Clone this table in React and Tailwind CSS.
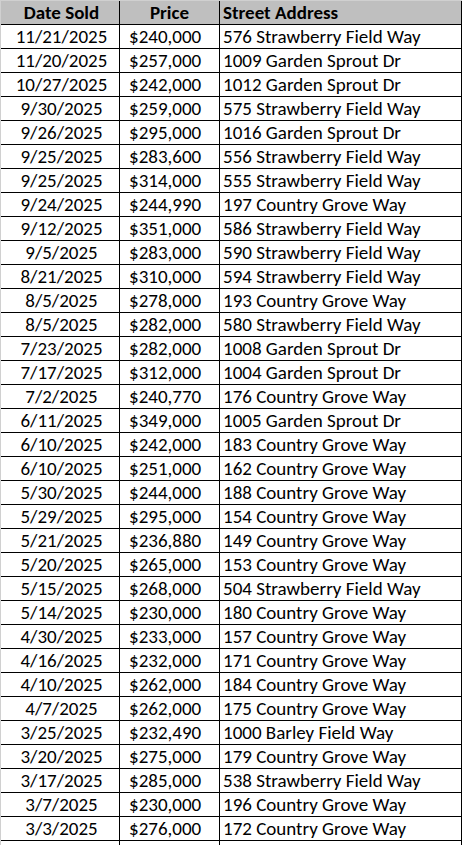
import React from "react";

const rows = [
  ["11/21/2025", "$240,000", "576 Strawberry Field Way"],
  ["11/20/2025", "$257,000", "1009 Garden Sprout Dr"],
  ["10/27/2025", "$242,000", "1012 Garden Sprout Dr"],
  ["9/30/2025", "$259,000", "575 Strawberry Field Way"],
  ["9/26/2025", "$295,000", "1016 Garden Sprout Dr"],
  ["9/25/2025", "$283,600", "556 Strawberry Field Way"],
  ["9/25/2025", "$314,000", "555 Strawberry Field Way"],
  ["9/24/2025", "$244,990", "197 Country Grove Way"],
  ["9/12/2025", "$351,000", "586 Strawberry Field Way"],
  ["9/5/2025", "$283,000", "590 Strawberry Field Way"],
  ["8/21/2025", "$310,000", "594 Strawberry Field Way"],
  ["8/5/2025", "$278,000", "193 Country Grove Way"],
  ["8/5/2025", "$282,000", "580 Strawberry Field Way"],
  ["7/23/2025", "$282,000", "1008 Garden Sprout Dr"],
  ["7/17/2025", "$312,000", "1004 Garden Sprout Dr"],
  ["7/2/2025", "$240,770", "176 Country Grove Way"],
  ["6/11/2025", "$349,000", "1005 Garden Sprout Dr"],
  ["6/10/2025", "$242,000", "183 Country Grove Way"],
  ["6/10/2025", "$251,000", "162 Country Grove Way"],
  ["5/30/2025", "$244,000", "188 Country Grove Way"],
  ["5/29/2025", "$295,000", "154 Country Grove Way"],
  ["5/21/2025", "$236,880", "149 Country Grove Way"],
  ["5/20/2025", "$265,000", "153 Country Grove Way"],
  ["5/15/2025", "$268,000", "504 Strawberry Field Way"],
  ["5/14/2025", "$230,000", "180 Country Grove Way"],
  ["4/30/2025", "$233,000", "157 Country Grove Way"],
  ["4/16/2025", "$232,000", "171 Country Grove Way"],
  ["4/10/2025", "$262,000", "184 Country Grove Way"],
  ["4/7/2025", "$262,000", "175 Country Grove Way"],
  ["3/25/2025", "$232,490", "1000 Barley Field Way"],
  ["3/20/2025", "$275,000", "179 Country Grove Way"],
  ["3/17/2025", "$285,000", "538 Strawberry Field Way"],
  ["3/7/2025", "$230,000", "196 Country Grove Way"],
  ["3/3/2025", "$276,000", "172 Country Grove Way"],
];

function Row({ cells, header }) {
  const base = "flex items-end h-[24px] border-b border-black";
  const cell = "h-full flex items-end pb-[1px] border-r border-black leading-[20px] whitespace-nowrap overflow-hidden";
  return (
    <div className={base + (header ? " bg-[#bfbfbf] font-bold" : "")}>
      <div className={cell + " w-[119px] justify-center pl-[3px]"}>{cells[0]}</div>
      <div className={cell + (header ? " w-[100px] justify-center" : " w-[100px] pl-[9px]")}>{cells[1]}</div>
      <div className={cell + " w-[242px] pl-[3px]"}>{cells[2]}</div>
    </div>
  );
}

export default function App() {
  return (
    <div
      className="w-[463px] h-[845px] overflow-hidden bg-white text-black text-[19px]"
      style={{ fontFamily: "Calibri, Carlito, Lato, sans-serif" }}
    >
      <div className="w-[462px] border-t border-l border-[#d0d0d0] bg-white">
        <Row header cells={["Date Sold", "Price", "Street Address"]} />
        {rows.map((r, i) => (
          <Row key={i} cells={r} />
        ))}
        <Row cells={["", "", ""]} />
      </div>
    </div>
  );
}
